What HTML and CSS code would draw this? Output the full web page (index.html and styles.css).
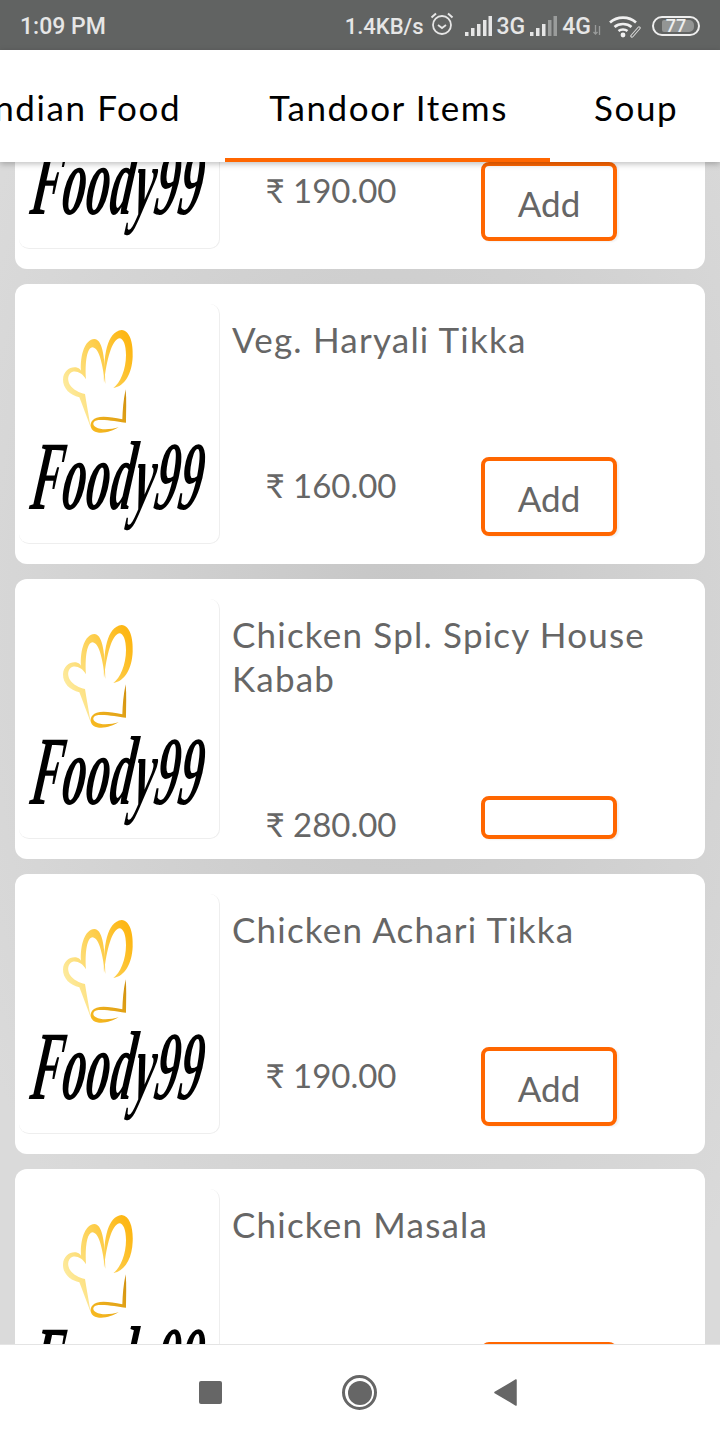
FILE: index.html
```html
<!DOCTYPE html>
<html lang="en">
<head>
  <meta charset="UTF-8" />
  <title>Foody99 Menu</title>
  <link rel="stylesheet" href="styles.css">
</head>
<body>

  <svg class="defs" width="0" height="0">
    <defs>
      <linearGradient id="hatGold" gradientUnits="userSpaceOnUse" x1="70" y1="200" x2="280" y2="100">
        <stop offset="0" stop-color="#fdeb9f" />
        <stop offset="0.5" stop-color="#fdd35a" />
        <stop offset="1" stop-color="#fdb714" />
      </linearGradient>
      <linearGradient id="hatBand" gradientUnits="userSpaceOnUse" x1="150" y1="340" x2="260" y2="220">
        <stop offset="0" stop-color="#fbbd22" />
        <stop offset="1" stop-color="#cf8f10" />
      </linearGradient>
      <symbol id="hat" viewBox="0 0 330 375">
        <path fill="url(#hatGold)" d="M152 322C140 290 128 258 118 232C90 226 68 205 69 178C70 152 92 138 112 143C118 145 121 148 123 152C120 105 135 58 163 57C185 58 195 100 196 192C188 140 180 85 158 82C140 82 135 130 138 178C128 160 112 152 98 155C84 160 80 178 90 195C100 210 118 218 135 222C140 255 147 290 152 322Z" />
        <path fill="url(#hatGold)" d="M192 190C190 110 200 35 245 30C270 32 280 70 278 110C276 160 255 198 220 204C240 190 258 150 258 105C258 75 250 55 238 55C215 60 200 120 192 190Z" />
        <path fill="url(#hatBand)" d="M257 208C250 240 248 270 247 298C215 292 190 287 170 293C150 300 146 320 160 332C180 345 215 335 236 322C215 328 185 332 168 322C155 314 158 302 175 300C200 298 235 305 258 308C258 275 260 240 257 208Z" />
      </symbol>
    </defs>
  </svg>

  <div class="status-bar">
    <span class="status-time">1:09 PM</span>
    <div class="status-right">
      <span class="status-text speed">1.4KB/s</span>
      <svg class="ic-alarm" width="24" height="26" viewBox="0 0 24 26">
        <circle cx="12" cy="14" r="9" fill="none" stroke="#e6e6e6" stroke-width="1.8" />
        <path d="M8 14l4 3 4-3" fill="none" stroke="#e6e6e6" stroke-width="1.8" />
        <path d="M1.500 6.500L6 2.500M22.500 6.500L18 2.500" stroke="#e6e6e6" stroke-width="2" />
      </svg>
      <svg class="ic-signal" width="27" height="20" viewBox="0 0 27 20">
        <rect x="0" y="16" width="3.500" height="4" fill="#e6e6e6" />
        <rect x="6" y="12" width="3.500" height="8" fill="#e6e6e6" />
        <rect x="12" y="8" width="3.500" height="12" fill="#e6e6e6" />
        <rect x="18" y="4" width="3.500" height="16" fill="#e6e6e6" />
        <rect x="23.500" y="0" width="3.500" height="20" fill="#e6e6e6" />
      </svg>
      <span class="status-text net">3G</span>
      <svg class="ic-signal second" width="27" height="20" viewBox="0 0 27 20">
        <rect x="0" y="16" width="3.500" height="4" fill="#e6e6e6" />
        <rect x="6" y="12" width="3.500" height="8" fill="#e6e6e6" />
        <rect x="12" y="8" width="3.500" height="12" fill="#e6e6e6" />
        <rect x="18" y="4" width="3.500" height="16" fill="#9a9c9b" />
        <rect x="23.500" y="0" width="3.500" height="20" fill="#9a9c9b" />
      </svg>
      <span class="status-text net">4G</span>
      <svg class="ic-arrows" width="9" height="10" viewBox="0 0 9 10">
        <path d="M2.500 0v9M0.500 7l2 2 2-2M6.500 10V1" fill="none" stroke="#9a9c9b" stroke-width="1.300" />
      </svg>
      <svg class="ic-wifi" width="32" height="24" viewBox="0 0 32 24">
        <path d="M1 8.500C8 2 20 2 27 8.500M5.500 13C10 9 18 9 22.500 13M9.500 17C12 15 16 15 18.500 17" fill="none" stroke="#f0f0f0" stroke-width="2.600" />
        <circle cx="14" cy="21" r="2.400" fill="#f0f0f0" />
        <path d="M23 22l7-8" stroke="#d8d8d8" stroke-width="3.400" stroke-linecap="round" fill="none" />
        <path d="M23 22l7-8" stroke="#616362" stroke-width="1.200" stroke-linecap="round" fill="none" />
      </svg>
      <div class="battery">
        <div class="battery-fill"></div>
        <span class="battery-num">77</span>
      </div>
    </div>
  </div>

  <div class="tabs">
    <div class="tab">Indian Food</div>
    <div class="tab active">Tandoor Items</div>
    <div class="tab">Soup</div>
  </div>

  <div class="list">

    <div class="card first">
      <div class="thumb">
        <svg class="hat"><use href="#hat" /></svg>
        <span class="brand">Foody99</span>
      </div>
      <div class="info">
        <div class="name">&nbsp;</div>
        <div class="buy">
          <div class="price">₹ 190.00</div>
          <button class="add">Add</button>
        </div>
      </div>
    </div>

    <div class="card">
      <div class="thumb">
        <svg class="hat"><use href="#hat" /></svg>
        <span class="brand">Foody99</span>
      </div>
      <div class="info">
        <div class="name">Veg. Haryali Tikka</div>
        <div class="buy">
          <div class="price">₹ 160.00</div>
          <button class="add">Add</button>
        </div>
      </div>
    </div>

    <div class="card">
      <div class="thumb">
        <svg class="hat"><use href="#hat" /></svg>
        <span class="brand">Foody99</span>
      </div>
      <div class="info">
        <div class="name">Chicken Spl. Spicy House Kabab</div>
        <div class="buy">
          <div class="price">₹ 280.00</div>
          <button class="add"></button>
        </div>
      </div>
    </div>

    <div class="card">
      <div class="thumb">
        <svg class="hat"><use href="#hat" /></svg>
        <span class="brand">Foody99</span>
      </div>
      <div class="info">
        <div class="name">Chicken Achari Tikka</div>
        <div class="buy">
          <div class="price">₹ 190.00</div>
          <button class="add">Add</button>
        </div>
      </div>
    </div>

    <div class="card">
      <div class="thumb">
        <svg class="hat"><use href="#hat" /></svg>
        <span class="brand">Foody99</span>
      </div>
      <div class="info">
        <div class="name">Chicken Masala</div>
        <div class="buy">
          <div class="price">₹ 190.00</div>
          <button class="add">Add</button>
        </div>
      </div>
    </div>

  </div>

  <div class="nav-bar">
    <span class="nav-square"></span>
    <span class="nav-home"><span class="nav-home-dot"></span></span>
    <svg class="nav-back" width="23" height="27" viewBox="0 0 23 27">
      <path d="M22 1L1 13.500 22 26Z" fill="#666" stroke="#666" stroke-width="1.500" stroke-linejoin="round" />
    </svg>
  </div>

</body>
</html>
```

FILE: styles.css
```css
html, body {
  margin: 0;
  padding: 0;
  height: 100%;
}

body {
  display: flex;
  flex-direction: column;
  width: 720px;
  height: 1440px;
  overflow: hidden;
  font-family: 'Lato', 'Noto Sans', sans-serif;
  background-color: #d3d3d3;
}

.defs {
  position: absolute;
}

/* status bar */
.status-bar {
  flex: 0 0 50px;
  display: flex;
  align-items: center;
  justify-content: space-between;
  padding: 2px 20px 0 20px;
  box-sizing: border-box;
  background-color: #616362;
  color: #e6e6e6;
  font-family: 'Roboto', sans-serif;
  font-weight: 500;
}

.status-time {
  font-size: 23px;
}

.status-right {
  display: flex;
  align-items: center;
}

.status-text {
  font-size: 23px;
}

.speed {
  font-size: 22px;
}

.ic-alarm {
  margin-left: 6px;
  margin-top: -4px;
}

.ic-signal {
  margin-left: 11px;
}

.ic-signal.second {
  margin-left: 5px;
}

.net {
  margin-left: 5px;
}

.ic-arrows {
  margin-left: 2px;
  margin-top: 8px;
}

.ic-wifi {
  margin-left: 7px;
}

.battery {
  position: relative;
  width: 48px;
  height: 20px;
  margin-left: 11px;
  box-sizing: border-box;
  border: 2px solid #eee;
  border-radius: 10px;
  display: flex;
  align-items: center;
  justify-content: center;
}

.battery-fill {
  position: absolute;
  left: 8px;
  top: 2px;
  bottom: 2px;
  width: 32px;
  background-color: #939594;
  border-radius: 2px 5px 5px 2px;
}

.battery-num {
  position: relative;
  font-size: 18px;
  line-height: 16px;
  color: #eee;
}

/* tabs */
.tabs {
  flex: 0 0 112px;
  position: relative;
  z-index: 2;
  display: flex;
  overflow: hidden;
  background-color: white;
  box-shadow: 0 2px 6px rgba(0,0,0,0.25);
}

.tab {
  flex: none;
  padding: 2px 44px 0;
  box-sizing: border-box;
  display: flex;
  align-items: center;
  white-space: nowrap;
  font-size: 35px;
  letter-spacing: 1.6px;
  color: black;
}

.tab:first-child {
  margin-left: -61px;
}

.tab.active {
  border-bottom: 4px solid #ff6600;
  padding-top: 6px;
  padding-right: 42px;
}

/* list */
.list {
  flex: 1;
  min-height: 0;
  overflow: hidden;
  display: flex;
  flex-direction: column;
  gap: 15px;
  padding: 0 15px;
  background: radial-gradient(ellipse 480px 800px at 55% 40%, #c6c6c6, #dadada);
}

.card {
  flex: none;
  height: 280px;
  display: flex;
  padding: 20px 0 20px 4px;
  box-sizing: border-box;
  background-color: white;
  border-radius: 12px;
}

.card.first {
  margin-top: -173px;
}

.thumb {
  flex: 0 0 201px;
  height: 240px;
  box-sizing: border-box;
  display: flex;
  flex-direction: column;
  align-items: center;
  border-right: 1px solid #eee;
  border-bottom: 1px solid #eee;
  border-radius: 10px;
  overflow: hidden;
}

.hat {
  width: 110px;
  height: 125px;
  margin-top: 16px;
  align-self: flex-start;
  margin-left: 21px;
  flex: none;
}

.brand {
  font-family: 'Liberation Serif', serif;
  font-style: italic;
  font-weight: bold;
  font-size: 70px;
  letter-spacing: 1px;
  line-height: 80px;
  margin-top: -8px;
  color: black;
  transform: skewX(-8deg) scale(0.66, 1.4);
  white-space: nowrap;
}

.info {
  flex: 1;
  min-width: 0;
  height: 240px;
  display: flex;
  flex-direction: column;
  padding-left: 12px;
}

.name {
  flex: none;
  padding-top: 13px;
  margin-bottom: 96px;
  padding-right: 40px;
  font-size: 35px;
  letter-spacing: 1.2px;
  line-height: 44px;
  color: #666;
}

.buy {
  flex: 1;
  min-height: 0;
  display: flex;
  align-items: stretch;
}

.price {
  flex: 0 0 198px;
  padding-top: 6px;
  text-align: center;
  font-size: 33px;
  line-height: 44px;
  color: #666;
}

.add {
  width: 136px;
  max-height: 79px;
  margin-left: 51px;
  padding: 3px 0 0;
  box-sizing: border-box;
  background-color: white;
  border: 4px solid #ff6600;
  border-radius: 8px;
  font-family: inherit;
  font-size: 35px;
  color: #666;
  box-shadow: 2px 1px 2px rgba(0,0,0,0.06);
}

/* bottom nav */
.nav-bar {
  flex: 0 0 96px;
  position: relative;
  z-index: 2;
  display: flex;
  align-items: center;
  justify-content: center;
  gap: 120px;
  padding-right: 4px;
  box-sizing: border-box;
  background-color: white;
  border-top: 1px solid #e4e4e4;
}

.nav-square {
  width: 23px;
  height: 23px;
  background-color: #666;
  border-radius: 2px;
}

.nav-home {
  width: 35px;
  height: 35px;
  box-sizing: border-box;
  border: 3px solid #666;
  border-radius: 50%;
  display: flex;
  align-items: center;
  justify-content: center;
}

.nav-home-dot {
  width: 24px;
  height: 24px;
  background-color: #666;
  border-radius: 50%;
}

.nav-back {
  margin-left: -3px;
}
```
